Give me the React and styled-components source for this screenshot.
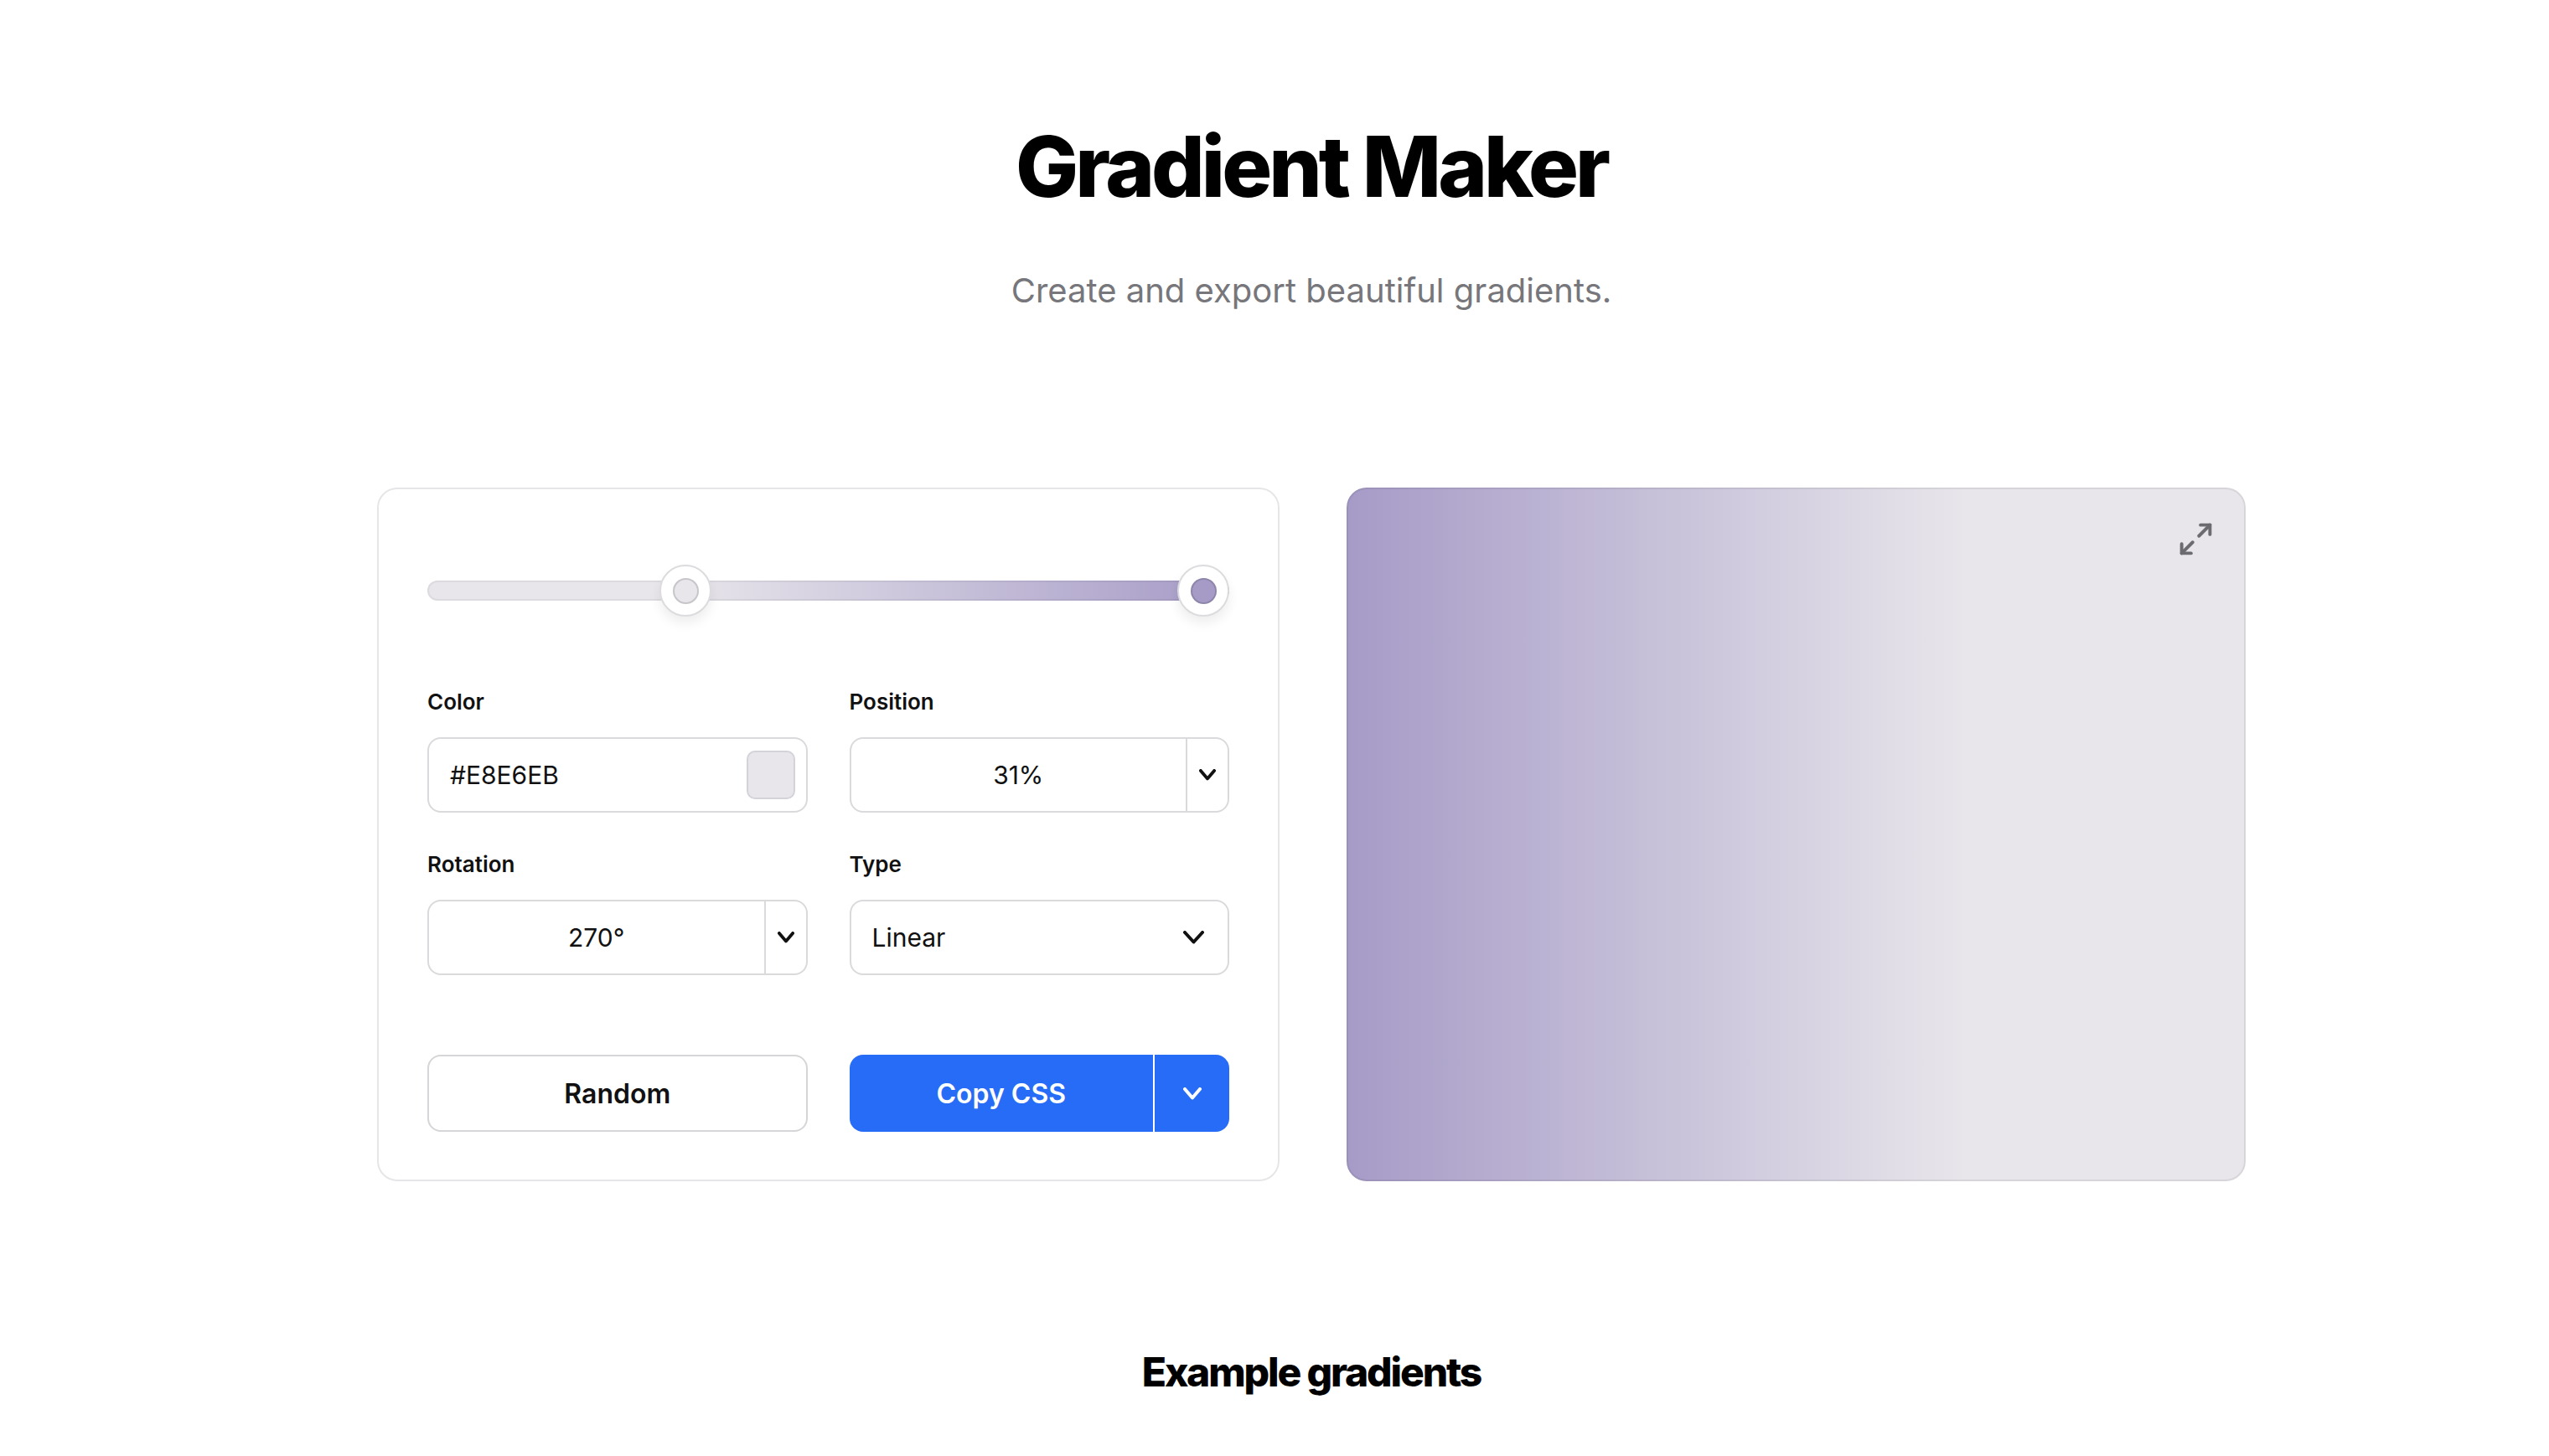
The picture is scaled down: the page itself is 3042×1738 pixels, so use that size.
import React from 'react';
import styled, {createGlobalStyle} from 'styled-components';
import {Maximize2} from 'lucide-react';

const GlobalStyle = createGlobalStyle`
  html, body {
    margin: 0;
    padding: 0;
    background: #fff;
  }
  body {
    font-family: Inter, "Noto Sans", "Liberation Sans", sans-serif;
    color: #000;
    -webkit-font-smoothing: antialiased;
  }
  * { box-sizing: border-box; }
`;

const Page = styled.div`
  display: flex;
  flex-direction: column;
  align-items: center;
  padding: 139px 0 0 88px;
  height: 1738px;
  overflow: hidden;
`;

const Title = styled.h1`
  margin: 0;
  font-size: 100px;
  line-height: 120px;
  font-weight: 800;
  letter-spacing: -0.04em;
`;

const Subtitle = styled.p`
  margin: 59px 0 0;
  font-size: 40px;
  line-height: 58px;
  font-weight: 400;
  color: #76767b;
  letter-spacing: 0;
`;

const Workspace = styled.div`
  display: flex;
  gap: 80px;
  margin-top: 206px;
`;

const Card = styled.div`
  width: 1077px;
  border: 2px solid #e6e6e8;
  border-radius: 24px;
  padding: 90px 58px 57px;
  background: #fff;
`;

const SliderWrap = styled.div`
  position: relative;
  height: 62px;
  display: flex;
  align-items: center;
`;

const Track = styled.div`
  width: 100%;
  height: 24px;
  border-radius: 12px;
  border: 2px solid rgba(0, 0, 0, 0.05);
  background: ${p => p.$gradient};
  background-origin: border-box;
`;

const Thumb = styled.div`
  position: absolute;
  top: 0;
  left: calc((100% - 62px) * ${p => p.$pos / 100});
  width: 62px;
  height: 62px;
  border-radius: 50%;
  background: #fff;
  border: 2px solid #dcdcdf;
  box-shadow: 0 8px 14px rgba(0, 0, 0, 0.07);
  display: flex;
  align-items: center;
  justify-content: center;
`;

const ThumbDot = styled.div`
  width: 31px;
  height: 31px;
  border-radius: 50%;
  background: ${p => p.$color};
  border: 2px solid rgba(0, 0, 0, 0.14);
`;

const Fields = styled.div`
  display: grid;
  grid-template-columns: 1fr 1fr;
  column-gap: 50px;
  row-gap: 45px;
  margin-top: 85px;
`;

const Field = styled.div`
  display: flex;
  flex-direction: column;
`;

const Label = styled.label`
  font-size: 26px;
  line-height: 33px;
  font-weight: 600;
  color: #111;
  margin-bottom: 26px;
`;

const Box = styled.div`
  height: 90px;
  border: 2px solid #dadadd;
  border-radius: 16px;
  display: flex;
  align-items: center;
  font-size: 30px;
  font-weight: 400;
  color: #111;
  background: #fff;
`;

const ColorBox = styled(Box)`
  justify-content: space-between;
  padding: 0 13px 0 25px;
`;

const Swatch = styled.div`
  width: 58px;
  height: 58px;
  border-radius: 10px;
  background: ${p => p.$color};
  border: 2px solid #d3d3d8;
`;

const StepValue = styled.div`
  flex: 1;
  text-align: center;
`;

const StepToggle = styled.div`
  width: 50px;
  height: 100%;
  border-left: 2px solid #dadadd;
  display: flex;
  align-items: center;
  justify-content: center;
`;

const SelectBox = styled(Box)`
  justify-content: space-between;
  padding: 0 28px 0 25px;
`;

const Buttons = styled.div`
  display: grid;
  grid-template-columns: 1fr 1fr;
  column-gap: 50px;
  margin-top: 95px;
`;

const SecondaryButton = styled.button`
  height: 92px;
  border: 2px solid #d6d6d9;
  border-radius: 16px;
  background: #fff;
  font-family: inherit;
  font-size: 32px;
  font-weight: 600;
  color: #111;
  cursor: pointer;
`;

const SplitButton = styled.div`
  height: 92px;
  display: flex;
  border-radius: 16px;
  overflow: hidden;
  background: #266cf6;
  color: #fff;
`;

const SplitMain = styled.button`
  flex: 1;
  border: 0;
  background: transparent;
  color: inherit;
  font-family: inherit;
  font-size: 32px;
  font-weight: 600;
  cursor: pointer;
`;

const SplitDivider = styled.div`
  width: 2px;
  background: #fff;
`;

const SplitToggle = styled.button`
  width: 89px;
  border: 0;
  background: transparent;
  display: flex;
  align-items: center;
  justify-content: center;
  cursor: pointer;
`;

const Preview = styled.div`
  position: relative;
  width: 1073px;
  border: 2px solid rgba(0, 0, 0, 0.07);
  border-radius: 24px;
  background: ${p => p.$gradient};
  background-origin: border-box;
`;

const ExpandButton = styled.div`
  position: absolute;
  top: 37px;
  right: 35px;
  color: #6b6b70;
  display: flex;
`;

const SectionTitle = styled.h2`
  margin: 199px 0 0;
  font-size: 48px;
  line-height: 58px;
  font-weight: 800;
  letter-spacing: -0.045em;
`;

const Chevron = ({w = 20, h = 10, stroke = 3.8, color = '#111'}) => (
    <svg width={w} height={h + stroke} viewBox={`0 0 ${w} ${h + stroke}`} fill="none">
        <polyline
            points={`${stroke / 2},${stroke / 2} ${w / 2},${h + stroke / 2 - 0.5} ${w - stroke / 2},${stroke / 2}`}
            stroke={color}
            strokeWidth={stroke}
            strokeLinecap="round"
            strokeLinejoin="round"
        />
    </svg>
);

const stops = [
    {color: '#E8E6EB', pos: 31},
    {color: '#A69BC7', pos: 100},
];

const App = () => {
    const stopList = stops.map(s => `${s.color} ${s.pos}%`).join(', ');
    const trackGradient = `linear-gradient(90deg, ${stopList})`;
    const previewGradient = `linear-gradient(270deg, ${stopList})`;

    return (
        <>
            <GlobalStyle/>
            <Page>
                <Title>Gradient Maker</Title>
                <Subtitle>Create and export beautiful gradients.</Subtitle>

                <Workspace>
                    <Card>
                        <SliderWrap>
                            <Track $gradient={trackGradient}/>
                            {stops.map(s => (
                                <Thumb key={s.pos} $pos={s.pos}>
                                    <ThumbDot $color={s.color}/>
                                </Thumb>
                            ))}
                        </SliderWrap>

                        <Fields>
                            <Field>
                                <Label>Color</Label>
                                <ColorBox>
                                    <span>#E8E6EB</span>
                                    <Swatch $color="#E8E6EB"/>
                                </ColorBox>
                            </Field>
                            <Field>
                                <Label>Position</Label>
                                <Box>
                                    <StepValue>31%</StepValue>
                                    <StepToggle><Chevron/></StepToggle>
                                </Box>
                            </Field>
                            <Field>
                                <Label>Rotation</Label>
                                <Box>
                                    <StepValue>270°</StepValue>
                                    <StepToggle><Chevron/></StepToggle>
                                </Box>
                            </Field>
                            <Field>
                                <Label>Type</Label>
                                <SelectBox>
                                    <span>Linear</span>
                                    <Chevron w={25} h={12} stroke={4}/>
                                </SelectBox>
                            </Field>
                        </Fields>

                        <Buttons>
                            <SecondaryButton>Random</SecondaryButton>
                            <SplitButton>
                                <SplitMain>Copy CSS</SplitMain>
                                <SplitDivider/>
                                <SplitToggle><Chevron w={22} h={11} stroke={4} color="#fff"/></SplitToggle>
                            </SplitButton>
                        </Buttons>
                    </Card>

                    <Preview $gradient={previewGradient}>
                        <ExpandButton>
                            <Maximize2 size={45} strokeWidth={2.1}/>
                        </ExpandButton>
                    </Preview>
                </Workspace>

                <SectionTitle>Example gradients</SectionTitle>
            </Page>
        </>
    );
};

export default App;
